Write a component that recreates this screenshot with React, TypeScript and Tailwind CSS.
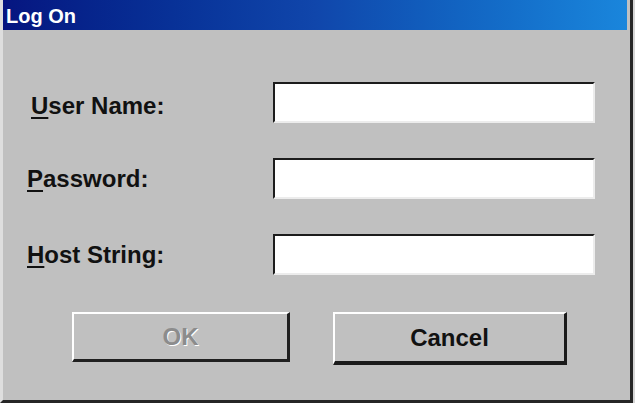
import React from "react";

const font = { fontFamily: '"Liberation Sans", Arial, sans-serif' };

function Field({ label, hotkey, first }: { label: string; hotkey: string; first?: boolean }) {
  const rest = label.slice(1);
  return (
    <div className="grid grid-cols-[246px_322px] items-center h-[41px]">
      <label className={`text-[24px] font-bold text-[#111] leading-none ${first ? "pl-[4px] pt-[7px]" : ""}`}>
        <span className="underline decoration-2 underline-offset-[3px]">{hotkey}</span>
        {rest}
      </label>
      <input
        type="text"
        className="h-[41px] w-[322px] bg-white border-t-2 border-l-2 border-t-[#1c1c1c] border-l-[#1c1c1c] border-b-2 border-r-2 border-b-[#ececec] border-r-[#ececec] outline-none"
      />
    </div>
  );
}

export default function App() {
  return (
    <div className="w-[635px] h-[403px] bg-[#d6d6d6] overflow-hidden" style={font}>
      <div className="w-[633px] h-[403px] flex flex-col bg-[#c0c0c0] border-l-[3px] border-l-[#dedede] border-r-[3px] border-r-[#262626] border-b-[3px] border-b-[#262626]">
        <div className="h-[30px] mr-[3px] flex items-center pl-[3px] pt-[1px] bg-linear-to-r from-[#061580] via-[#1046ab] to-[#1a86dc]">
          <span className="text-white font-bold text-[20px] leading-none">Log On</span>
        </div>

        <div className="flex flex-col pl-[24px] pt-[52px]">
          <div className="flex flex-col gap-[35px]">
            <Field label="User Name:" hotkey="U" first />
            <Field label="Password:" hotkey="P" />
            <Field label="Host String:" hotkey="H" />
          </div>

          <div className="flex gap-[43px] ml-[45px] mt-[37px]">
            <button
              disabled
              className="w-[218px] h-[50px] bg-[#c0c0c0] border-t-2 border-l-2 border-t-white border-l-white border-b-[3px] border-r-[3px] border-b-[#202020] border-r-[#202020] text-[24px] font-bold text-[#8c8c8c] [text-shadow:1px_1px_0_#ffffff]"
            >
              OK
            </button>
            <button className="w-[234px] h-[53px] bg-[#c0c0c0] border-t-2 border-l-2 border-t-white border-l-white border-b-[4px] border-r-[3px] border-b-[#1a1a1a] border-r-[#1a1a1a] text-[24px] font-bold text-[#111]">
              Cancel
            </button>
          </div>
        </div>
      </div>
    </div>
  );
}
